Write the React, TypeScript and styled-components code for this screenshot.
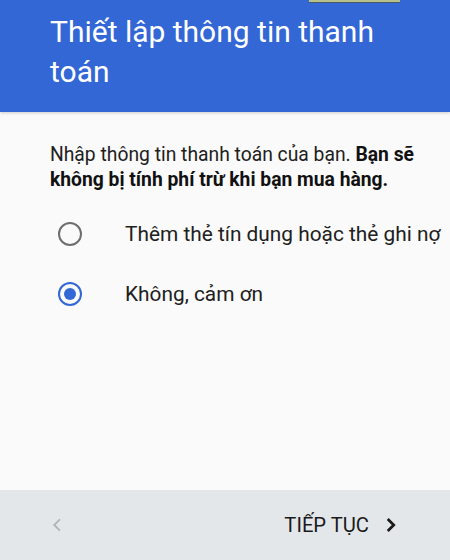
import React, { useState } from "react";
import styled, { createGlobalStyle } from "styled-components";

const Global = createGlobalStyle`
  html, body {
    margin: 0;
    padding: 0;
    background: #fafafa;
  }
  body {
    font-family: Roboto, "Noto Sans", "Liberation Sans", sans-serif;
    -webkit-font-smoothing: antialiased;
  }
`;

const Screen = styled.div`
  position: relative;
  width: 450px;
  height: 560px;
  display: flex;
  flex-direction: column;
  background: #fafafa;
  overflow: hidden;
`;

const Header = styled.header`
  height: 112px;
  box-sizing: border-box;
  padding: 12px 30px 0 50px;
  background: #3367d6;
  box-shadow: 0 1px 3px rgba(0, 0, 0, 0.18);
  position: relative;
  z-index: 1;
`;

const Title = styled.h1`
  margin: 0;
  font-size: 30px;
  line-height: 40px;
  font-weight: 400;
  color: #ffffff;
`;

const Peek = styled.div`
  position: absolute;
  top: 0;
  left: 309px;
  width: 91px;
  height: 2px;
  background: #b6c28a;
  border-bottom: 1px solid #4a5a6a;
`;

const Main = styled.main`
  flex: 1;
  padding: 30px 10px 0 50px;
`;

const Intro = styled.p`
  margin: 0 0 12px;
  font-size: 19.3px;
  line-height: 25px;
  color: #202020;
  white-space: nowrap;
`;

const Strong = styled.strong`
  font-weight: 700;
  color: #111;
`;

const Options = styled.div`
  display: flex;
  flex-direction: column;
`;

const Option = styled.label`
  display: flex;
  align-items: center;
  height: 60px;
  cursor: pointer;
`;

const Radio = styled.span<{ $on: boolean }>`
  box-sizing: border-box;
  flex-shrink: 0;
  width: 24px;
  height: 24px;
  margin-left: 8px;
  margin-right: 43px;
  border-radius: 50%;
  border: 2.5px solid ${(p) => (p.$on ? "#3367d6" : "#6e6e6e")};
  display: flex;
  align-items: center;
  justify-content: center;
  &::after {
    content: "";
    width: 12px;
    height: 12px;
    border-radius: 50%;
    background: #3367d6;
    display: ${(p) => (p.$on ? "block" : "none")};
  }
`;

const OptionText = styled.span`
  font-size: 20.85px;
  color: #202020;
  white-space: nowrap;
`;

const Footer = styled.footer`
  height: 70px;
  flex-shrink: 0;
  background: #e3e7ea;
  display: flex;
  align-items: center;
  justify-content: space-between;
  padding: 0 48px 0 46px;
`;

const NavButton = styled.button<{ $disabled?: boolean }>`
  display: flex;
  align-items: center;
  gap: 11px;
  border: 0;
  background: none;
  padding: 0;
  font-family: inherit;
  font-size: 20.2px;
  color: ${(p) => (p.$disabled ? "#b0b4b8" : "#1a1a1a")};
  cursor: pointer;
`;

const Chevron = ({ dir, color, weight }: { dir: "left" | "right"; color: string; weight: number }) => (
  <svg width="22" height="22" viewBox="0 0 24 24" fill="none">
    <path
      d={dir === "left" ? "M14.5 6.5 9 12l5.5 5.5" : "M9.5 6.5 15 12l-5.5 5.5"}
      stroke={color}
      strokeWidth={weight}
      strokeLinecap="square"
    />
  </svg>
);

export default function App() {
  const [choice, setChoice] = useState("none");
  const options = [
    { id: "card", label: "Thêm thẻ tín dụng hoặc thẻ ghi nợ" },
    { id: "none", label: "Không, cảm ơn" },
  ];
  return (
    <Screen>
      <Global />
      <Header>
        <Peek />
        <Title>Thiết lập thông tin thanh toán</Title>
      </Header>
      <Main>
        <Intro>
          Nhập thông tin thanh toán của bạn. <Strong>Bạn sẽ</Strong>
          <br />
          <Strong>không bị tính phí trừ khi bạn mua hàng.</Strong>
        </Intro>
        <Options>
          {options.map((o) => (
            <Option key={o.id} onClick={() => setChoice(o.id)}>
              <Radio $on={choice === o.id} />
              <OptionText>{o.label}</OptionText>
            </Option>
          ))}
        </Options>
      </Main>
      <Footer>
        <NavButton $disabled aria-label="Quay lại">
          <Chevron dir="left" color="#b0b4b8" weight={2} />
        </NavButton>
        <NavButton>
          TIẾP TỤC
          <Chevron dir="right" color="#1a1a1a" weight={3} />
        </NavButton>
      </Footer>
    </Screen>
  );
}
